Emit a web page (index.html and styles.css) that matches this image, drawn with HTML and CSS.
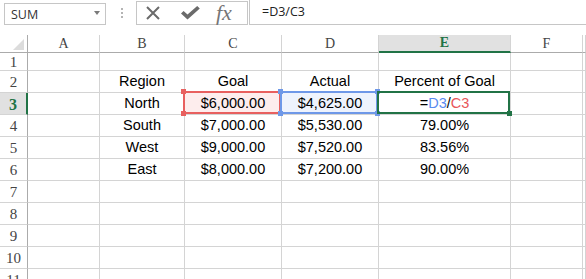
FILE: index.html
```html
<!DOCTYPE html>
<html>
<head>
<meta charset="utf-8">
<link rel="stylesheet" href="styles.css">
</head>
<body>
<div class="toolbar">
  <div class="namebox"><span>SUM</span><span class="caret"></span></div>
  <div class="grip"><i></i><i></i><i></i></div>
  <div class="fxbox">
    <svg class="ico-x" width="14" height="14" viewBox="0 0 14 14"><path d="M1 1 L13 13 M13 1 L1 13" stroke="#6b6b6b" stroke-width="2" fill="none"/></svg>
    <svg class="ico-check" width="19" height="14" viewBox="0 0 19 14"><path d="M0 7.5 L2.6 5 L6.5 8.6 L16.2 0 L18.8 2.4 L6.5 13.6 Z" fill="#6b6b6b"/></svg>
    <span class="fx">fx</span>
  </div>
  <div class="formula">=D3/C3</div>
</div>
<div class="sheet">
  <div class="row hdr">
    <div class="c rh corner"><svg width="11" height="11" viewBox="0 0 11 11"><path d="M11 0 L11 11 L0 11 Z" fill="#dcdcdc"/></svg></div>
    <div class="c">A</div><div class="c">B</div><div class="c">C</div><div class="c">D</div><div class="c active">E</div><div class="c">F</div><div class="c"></div>
  </div>
  <div class="row r1">
    <div class="c rh">1</div><div class="c"></div><div class="c"></div><div class="c"></div><div class="c"></div><div class="c"></div><div class="c"></div><div class="c"></div>
  </div>
  <div class="row">
    <div class="c rh">2</div><div class="c"></div><div class="c">Region</div><div class="c">Goal</div><div class="c">Actual</div><div class="c">Percent of Goal</div><div class="c"></div><div class="c"></div>
  </div>
  <div class="row">
    <div class="c rh active">3</div><div class="c"></div><div class="c">North</div>
    <div class="c ref-c-cell">$6,000.00<span class="sel sel-red"><i class="sq tl"></i><i class="sq tr"></i><i class="sq bl"></i><i class="sq br"></i></span></div>
    <div class="c ref-d-cell">$4,625.00<span class="sel sel-blue"><i class="sq tl"></i><i class="sq tr"></i><i class="sq bl"></i><i class="sq br"></i></span></div>
    <div class="c edit-cell">=<span class="ref-d">D3</span>/<span class="ref-c">C3</span><span class="sel sel-green"><i class="handle"></i></span></div>
    <div class="c"></div><div class="c"></div>
  </div>
  <div class="row">
    <div class="c rh">4</div><div class="c"></div><div class="c">South</div><div class="c">$7,000.00</div><div class="c">$5,530.00</div><div class="c">79.00%</div><div class="c"></div><div class="c"></div>
  </div>
  <div class="row">
    <div class="c rh">5</div><div class="c"></div><div class="c">West</div><div class="c">$9,000.00</div><div class="c">$7,520.00</div><div class="c">83.56%</div><div class="c"></div><div class="c"></div>
  </div>
  <div class="row">
    <div class="c rh">6</div><div class="c"></div><div class="c">East</div><div class="c">$8,000.00</div><div class="c">$7,200.00</div><div class="c">90.00%</div><div class="c"></div><div class="c"></div>
  </div>
  <div class="row">
    <div class="c rh">7</div><div class="c"></div><div class="c"></div><div class="c"></div><div class="c"></div><div class="c"></div><div class="c"></div><div class="c"></div>
  </div>
  <div class="row">
    <div class="c rh">8</div><div class="c"></div><div class="c"></div><div class="c"></div><div class="c"></div><div class="c"></div><div class="c"></div><div class="c"></div>
  </div>
  <div class="row">
    <div class="c rh">9</div><div class="c"></div><div class="c"></div><div class="c"></div><div class="c"></div><div class="c"></div><div class="c"></div><div class="c"></div>
  </div>
  <div class="row">
    <div class="c rh">10</div><div class="c"></div><div class="c"></div><div class="c"></div><div class="c"></div><div class="c"></div><div class="c"></div><div class="c"></div>
  </div>
  <div class="row">
    <div class="c rh">11</div><div class="c"></div><div class="c"></div><div class="c"></div><div class="c"></div><div class="c"></div><div class="c"></div><div class="c"></div>
  </div>
</div>
</body>
</html>
```
FILE: styles.css
```css
* { box-sizing: border-box; }
html, body { margin: 0; padding: 0; background: #fff; }
body {
  width: 586px;
  height: 279px;
  overflow: hidden;
  font-family: "Liberation Sans", Arial, sans-serif;
}

/* toolbar */
.toolbar {
  display: flex;
  align-items: flex-start;
  height: 35px;
}
.namebox {
  margin: 3px 0 0 4px;
  width: 102px;
  height: 22px;
  border: 1px solid #c6c6c6;
  display: flex;
  align-items: center;
  justify-content: space-between;
  padding: 0 5px 0 6px;
  font-family: "Open Sans", "Noto Sans", sans-serif;
  font-size: 12.5px;
  color: #333;
}
.caret {
  width: 0;
  height: 0;
  border-left: 3.5px solid transparent;
  border-right: 3.5px solid transparent;
  border-top: 4px solid #7a7a7a;
  margin-top: -2px;
}
.grip {
  margin: 8px 0 0 15px;
  display: flex;
  flex-direction: column;
  gap: 2px;
}
.grip i {
  display: block;
  width: 2px;
  height: 2px;
  background: #b4b4b4;
}
.fxbox {
  margin: 1px 0 0 13px;
  width: 112px;
  height: 24px;
  border: 1px solid #c6c6c6;
  display: flex;
  align-items: center;
  padding-left: 9px;
}
.ico-check { margin-left: 21px; }
.fx {
  margin-left: 16px;
  font-family: "Liberation Serif", "DejaVu Serif", serif;
  font-style: italic;
  font-size: 22px;
  color: #767676;
  line-height: 20px;
  margin-top: -1px;
}
.formula {
  margin-left: 1px;
  flex: 1;
  height: 25px;
  border-left: 1px solid #c6c6c6;
  border-bottom: 1px solid #c6c6c6;
  padding-left: 12px;
  font-family: "Open Sans", "Noto Sans", sans-serif;
  font-size: 12.5px;
  line-height: 24px;
  color: #222;
}

/* sheet */
.row {
  display: grid;
  grid-template-columns: 28px 72px 85px 97px 97px 132px 72px 1fr;
  height: 22px;
}
.row.hdr, .row.r1 { height: 18px; }
.c {
  border-right: 1px solid #d4d4d4;
  border-bottom: 1px solid #d4d4d4;
  text-align: center;
  font-size: 14.5px;
  line-height: 21px;
  color: #000;
  white-space: nowrap;
  overflow: visible;
}
.r1 .c { line-height: 17px; }
.rh {
  border-right-color: #ababab;
  font-family: "Liberation Serif", "DejaVu Serif", serif;
  font-size: 15px;
  color: #444;
  padding-top: 2px;
  line-height: 19px;
}
.r1 .rh { line-height: 16px; padding-top: 1px; }
.rh.active {
  background: #e1e1e1;
  color: #217346;
  font-weight: bold;
  font-size: 16px;
  border-right: 2px solid #217346;
}
.hdr .c {
  border-bottom-color: #ababab;
  font-family: "Liberation Serif", "DejaVu Serif", serif;
  font-size: 14px;
  color: #444;
  line-height: 17px;
}
.hdr .c.active {
  background: #e1e1e1;
  color: #217346;
  font-weight: bold;
  border-bottom: 2px solid #217346;
  line-height: 16px;
}
.hdr .corner {
  display: flex;
  justify-content: flex-end;
  align-items: flex-end;
  padding: 0 3px 2px 0;
}

/* selections */
.ref-c-cell, .ref-d-cell, .edit-cell { position: relative; }
.ref-c-cell { background: #fdeded; }
.ref-d-cell { background: #eef3fd; }
.sel {
  position: absolute;
  top: -2px;
  left: -2px;
  right: 0;
  bottom: 0;
  border: 2px solid;
  z-index: 2;
}
.sel-red { border-color: #e8605f; }
.sel-blue { border-color: #6e98e8; z-index: 3; }
.sel-green { border-color: #217346; z-index: 4; }
.sq {
  position: absolute;
  width: 5px;
  height: 5px;
}
.sel-red .sq { background: #e8605f; }
.sel-blue .sq { background: #6e98e8; }
.sq.tl { left: -4px; top: -4px; }
.sq.tr { right: -4px; top: -4px; }
.sq.bl { left: -4px; bottom: -4px; }
.sq.br { right: -4px; bottom: -4px; }
.handle {
  position: absolute;
  right: -4px;
  bottom: -4px;
  width: 5px;
  height: 5px;
  background: #217346;
}
.ref-d { color: #5a8cf0; }
.ref-c { color: #e8555a; }
```
